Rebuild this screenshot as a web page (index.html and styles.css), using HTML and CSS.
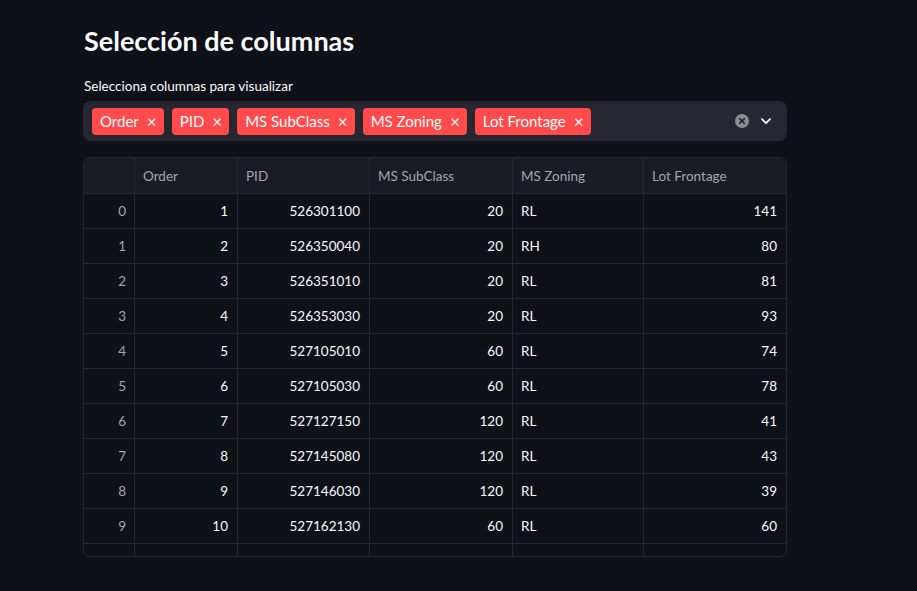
FILE: index.html
```html
<!DOCTYPE html>
<html lang="es">
<head>
<meta charset="utf-8">
<link rel="stylesheet" href="styles.css">
</head>
<body>
<main class="main">
  <h2 class="title">Selección de columnas</h2>
  <label class="label">Selecciona columnas para visualizar</label>
  <div class="select">
    <div class="tags">
      <span class="tag">Order<span class="x">×</span></span>
      <span class="tag">PID<span class="x">×</span></span>
      <span class="tag">MS SubClass<span class="x">×</span></span>
      <span class="tag">MS Zoning<span class="x">×</span></span>
      <span class="tag">Lot Frontage<span class="x">×</span></span>
    </div>
    <div class="controls">
      <svg class="clear" width="14" height="14" viewBox="0 0 14 14"><circle cx="7" cy="7" r="7" fill="#8b8d93"/><path d="M4.6 4.6 9.4 9.4M9.4 4.6 4.6 9.4" stroke="#262730" stroke-width="1.6" stroke-linecap="round"/></svg>
      <svg class="chev" width="14" height="14" viewBox="0 0 14 14"><path d="M3 5.2 7 9.2 11 5.2" fill="none" stroke="#fafafa" stroke-width="1.8" stroke-linecap="round" stroke-linejoin="round"/></svg>
    </div>
  </div>
  <div class="grid">
    <div class="row head">
      <div class="c idx"></div><div class="c">Order</div><div class="c">PID</div><div class="c">MS SubClass</div><div class="c">MS Zoning</div><div class="c">Lot Frontage</div>
    </div>
    <div class="row"><div class="c idx">0</div><div class="c n">1</div><div class="c n">526301100</div><div class="c n">20</div><div class="c">RL</div><div class="c n">141</div></div>
    <div class="row"><div class="c idx">1</div><div class="c n">2</div><div class="c n">526350040</div><div class="c n">20</div><div class="c">RH</div><div class="c n">80</div></div>
    <div class="row"><div class="c idx">2</div><div class="c n">3</div><div class="c n">526351010</div><div class="c n">20</div><div class="c">RL</div><div class="c n">81</div></div>
    <div class="row"><div class="c idx">3</div><div class="c n">4</div><div class="c n">526353030</div><div class="c n">20</div><div class="c">RL</div><div class="c n">93</div></div>
    <div class="row"><div class="c idx">4</div><div class="c n">5</div><div class="c n">527105010</div><div class="c n">60</div><div class="c">RL</div><div class="c n">74</div></div>
    <div class="row"><div class="c idx">5</div><div class="c n">6</div><div class="c n">527105030</div><div class="c n">60</div><div class="c">RL</div><div class="c n">78</div></div>
    <div class="row"><div class="c idx">6</div><div class="c n">7</div><div class="c n">527127150</div><div class="c n">120</div><div class="c">RL</div><div class="c n">41</div></div>
    <div class="row"><div class="c idx">7</div><div class="c n">8</div><div class="c n">527145080</div><div class="c n">120</div><div class="c">RL</div><div class="c n">43</div></div>
    <div class="row"><div class="c idx">8</div><div class="c n">9</div><div class="c n">527146030</div><div class="c n">120</div><div class="c">RL</div><div class="c n">39</div></div>
    <div class="row"><div class="c idx">9</div><div class="c n">10</div><div class="c n">527162130</div><div class="c n">60</div><div class="c">RL</div><div class="c n">60</div></div>
    <div class="row"><div class="c idx"></div><div class="c n"></div><div class="c n"></div><div class="c n"></div><div class="c"></div><div class="c n"></div></div>
  </div>
</main>
</body>
</html>
```
FILE: styles.css
```css
* { box-sizing: border-box; }
html, body { margin: 0; padding: 0; }
body {
  background: #0e1117;
  color: #fafafa;
  font-family: "Lato", "Noto Sans", sans-serif;
  width: 917px;
  height: 591px;
  overflow: hidden;
}
.main {
  padding: 22px 0 0 83px;
  width: 787px;
}
.title {
  margin: 0;
  font-size: 27px;
  font-weight: 700;
  line-height: 38px;
  padding-left: 1px;
}
.label {
  display: block;
  margin-top: 17px;
  font-size: 13.5px;
  line-height: 18px;
  padding-left: 1px;
}
.select {
  margin-top: 6px;
  height: 40px;
  background: #262730;
  border-radius: 8px;
  display: flex;
  align-items: center;
  justify-content: space-between;
  padding: 0 14px 0 9px;
}
.tags { display: flex; gap: 8px; }
.tag {
  background: #ff4b4b;
  color: #fff;
  border-radius: 4px;
  height: 27px;
  display: flex;
  align-items: center;
  padding: 0 7px 0 8px;
  font-size: 15px;
}
.tag .x { margin-left: 8px; font-size: 17px; line-height: 1; }
.controls { display: flex; align-items: center; gap: 10px; }
.clear, .chev { display: block; }
.grid {
  margin-top: 16px;
  height: 400px;
  border: 1px solid #25272e;
  border-radius: 7px;
  overflow: hidden;
}
.row {
  display: grid;
  grid-template-columns: 51px 103px 132px 143px 131px 142px;
  height: 35px;
  border-bottom: 1px solid #25272e;
  font-size: 13.5px;
}
.row.head { background: #1a1c24; height: 36px; color: #a2a5ac; }
.c {
  border-right: 1px solid #25272e;
  display: flex;
  align-items: center;
  padding: 0 8px;
  white-space: nowrap;
}
.c:last-child { border-right: none; }
.c.n { justify-content: flex-end; padding-right: 9px; }
.c.idx { justify-content: flex-end; color: #a2a5ac; padding-right: 8px; }
```
